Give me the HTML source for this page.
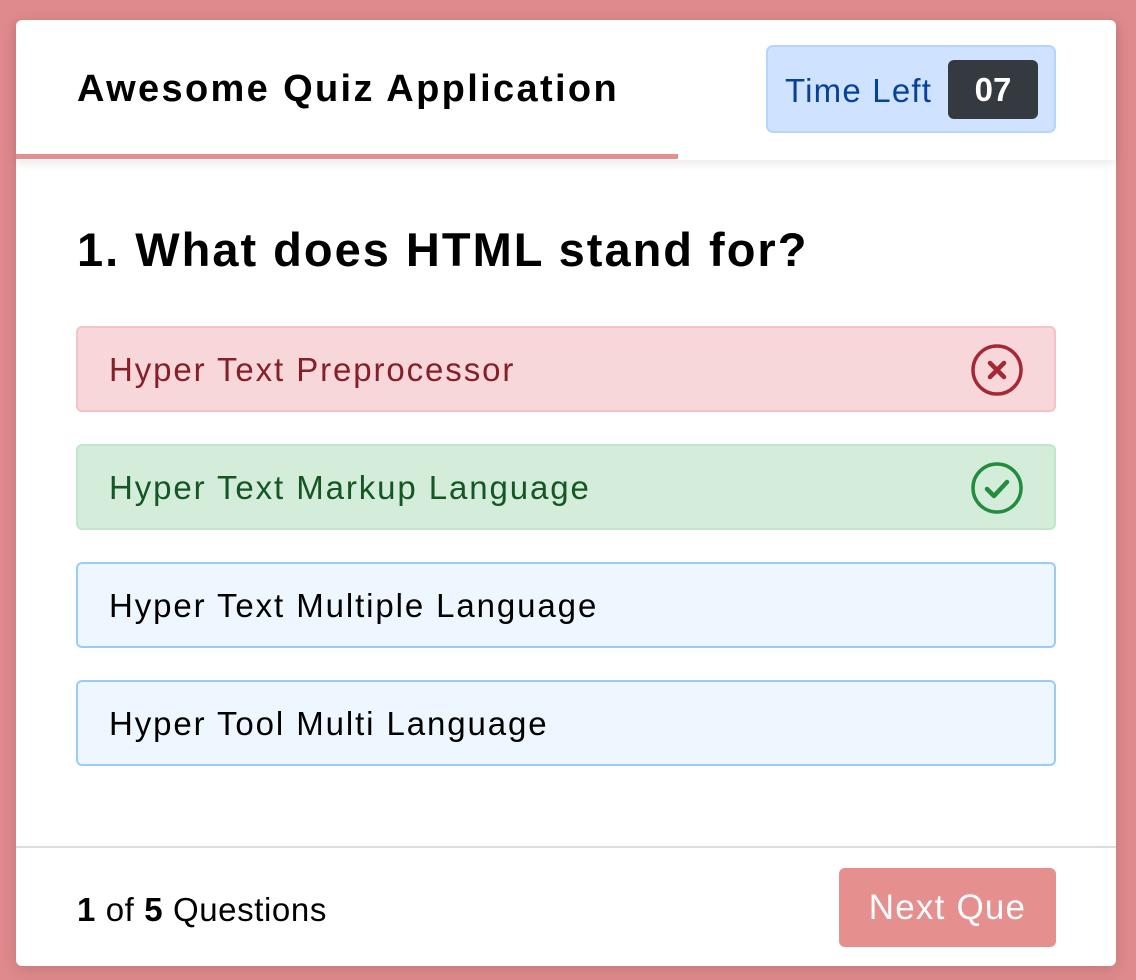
<!DOCTYPE html>
<html><head><style>
*{box-sizing:border-box;margin:0;padding:0}
body{width:1136px;height:980px;background:#df8a8c;font-family:"Liberation Sans",sans-serif;position:relative;overflow:hidden}
.card{position:absolute;left:16px;top:20px;width:1100px;height:946px;background:#fff;border-radius:6px;box-shadow:0 4px 16px rgba(0,0,0,.12)}
.head{position:absolute;left:0;top:0;width:1100px;height:140px;box-shadow:0 4px 8px rgba(0,0,0,.08)}
.title{position:absolute;left:61px;top:48px;font-size:38px;font-weight:bold;letter-spacing:2.35px;color:#000}
.prog{position:absolute;left:0;top:134px;width:662px;height:5px;background:#e58f8f}
.timer{position:absolute;left:750px;top:25px;width:290px;height:88px;background:#cfe2ff;border:2px solid #b6d4fe;border-radius:7px}
.timer span{position:absolute;left:17px;top:25px;font-size:33px;color:#084298;letter-spacing:1.2px}
.sec{position:absolute;left:180px;top:13px;width:90px;height:59px;background:#343a40;border-radius:6px;color:#fff;font-size:33px;font-weight:bold;text-align:center;line-height:59px}
.q{position:absolute;left:61px;top:202px;font-size:47px;font-weight:bold;color:#000;letter-spacing:2px}
.opt{position:absolute;left:60px;width:980px;height:86px;border-radius:6px;border:2px solid #9ccbf8;background:#eef6ff;font-size:33px;letter-spacing:1.9px;padding-left:31px;line-height:84px;color:#000}
.wrong{background:#f8d7da;border-color:#f5c2c7;color:#842029}
.right{background:#d4edda;border-color:#c3e6cb;color:#155724}
.opt svg{position:absolute;right:30px;top:15px}
.foot{position:absolute;left:0;top:826px;width:1100px;border-top:2px solid #ddd;height:120px}
.count{position:absolute;left:61px;top:43px;font-size:33px;letter-spacing:0.6px;color:#000}
.btn{position:absolute;left:823px;top:20px;width:217px;height:79px;background:#e58f8f;border-radius:6px;color:#fff;font-size:35px;text-align:center;line-height:79px;letter-spacing:1.2px}
</style></head><body>
<div class="card">
<div class="head">
<div class="title">Awesome Quiz Application</div>
<div class="timer"><span>Time Left</span><div class="sec">07</div></div>
<div class="prog"></div>
</div>
<div class="q">1. What does HTML stand for?</div>
<div class="opt wrong" style="top:306px">Hyper Text Preprocessor<svg width="54" height="54" viewBox="0 0 54 54"><circle cx="27" cy="27" r="24" fill="none" stroke="#a52834" stroke-width="3.5"/><path d="M20 20L34 34M34 20L20 34" stroke="#a52834" stroke-width="4.5" stroke-linecap="round"/></svg></div>
<div class="opt right" style="top:424px">Hyper Text Markup Language<svg width="54" height="54" viewBox="0 0 54 54"><circle cx="27" cy="27" r="24" fill="none" stroke="#238c3f" stroke-width="3.5"/><path d="M17 28L24 35L37 21" fill="none" stroke="#238c3f" stroke-width="4.5" stroke-linecap="round" stroke-linejoin="round"/></svg></div>
<div class="opt" style="top:542px">Hyper Text Multiple Language</div>
<div class="opt" style="top:660px">Hyper Tool Multi Language</div>
<div class="foot">
<div class="count"><b>1</b> of <b>5</b> Questions</div>
<div class="btn">Next Que</div>
</div>
</div>
</body></html>
